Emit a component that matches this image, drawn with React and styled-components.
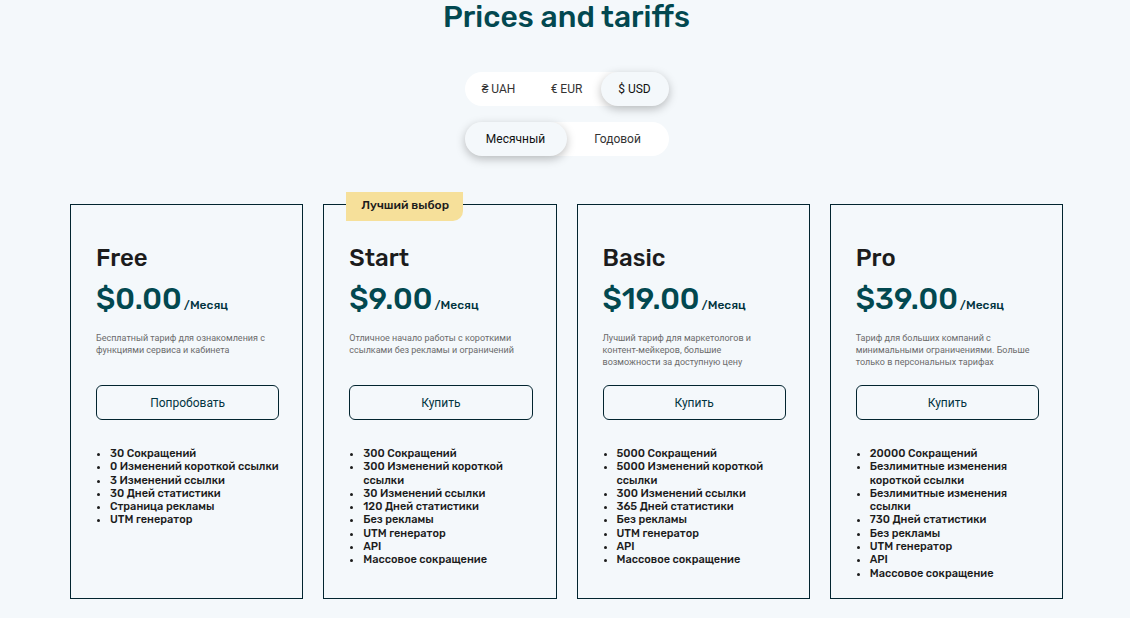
import React, { useState } from 'react'
import styled, { createGlobalStyle } from 'styled-components'

const currencies = [
  { id: 'uah', label: '₴ UAH' },
  { id: 'eur', label: '€ EUR' },
  { id: 'usd', label: '$ USD' },
]

const periods = [
  { id: 'month', label: 'Месячный' },
  { id: 'year', label: 'Годовой' },
]

const plans = [
  {
    name: 'Free',
    price: '$0.00',
    description: 'Бесплатный тариф для ознакомления с функциями сервиса и кабинета',
    action: 'Попробовать',
    features: [
      '30 Сокращений',
      '0 Изменений короткой ссылки',
      '3 Изменений ссылки',
      '30 Дней статистики',
      'Страница рекламы',
      'UTM генератор',
    ],
  },
  {
    name: 'Start',
    price: '$9.00',
    badge: 'Лучший выбор',
    description: 'Отличное начало работы с короткими ссылками без рекламы и ограничений',
    action: 'Купить',
    features: [
      '300 Сокращений',
      '300 Изменений короткой ссылки',
      '30 Изменений ссылки',
      '120 Дней статистики',
      'Без рекламы',
      'UTM генератор',
      'API',
      'Массовое сокращение',
    ],
  },
  {
    name: 'Basic',
    price: '$19.00',
    description: 'Лучший тариф для маркетологов и контент-мейкеров, большие возможности за доступную цену',
    action: 'Купить',
    features: [
      '5000 Сокращений',
      '5000 Изменений короткой ссылки',
      '300 Изменений ссылки',
      '365 Дней статистики',
      'Без рекламы',
      'UTM генератор',
      'API',
      'Массовое сокращение',
    ],
  },
  {
    name: 'Pro',
    price: '$39.00',
    description: 'Тариф для больших компаний с минимальными ограничениями. Больше только в персональных тарифах',
    action: 'Купить',
    features: [
      '20000 Сокращений',
      'Безлимитные изменения короткой ссылки',
      'Безлимитные изменения ссылки',
      '730 Дней статистики',
      'Без рекламы',
      'UTM генератор',
      'API',
      'Массовое сокращение',
    ],
  },
]

const GlobalStyle = createGlobalStyle`
  * {
    box-sizing: border-box;
    margin: 0;
    padding: 0;
  }
  body {
    background-color: #f4f8fb;
    color: #1c1c1c;
    font-family: Roboto, 'Liberation Sans', sans-serif;
  }
`

const Page = styled.main`
  display: flex;
  flex-direction: column;
  align-items: center;
  padding: 0 67px 19px 70px;
`

const Title = styled.h1`
  color: #024850;
  font-family: Rubik, Roboto, sans-serif;
  font-size: 30px;
  font-weight: 500;
  line-height: 34px;
  text-align: center;
`

const Switches = styled.div`
  display: flex;
  flex-direction: column;
  gap: 16px;
  width: 204px;
  margin: 38px 0 48px;
`

const SwitchGroup = styled.fieldset`
  display: flex;
  border: none;
  border-radius: 17px;
  background-color: #fff;
`

const Option = styled.label`
  flex: 1 1 0;
  border-radius: 17px;
  color: ${({ $selected }) => ($selected ? '#111' : '#333')};
  background-color: ${({ $selected }) => ($selected ? '#f4f8fb' : 'transparent')};
  box-shadow: ${({ $selected }) => ($selected ? '0 3px 10px rgba(0, 0, 0, 0.25)' : 'none')};
  cursor: pointer;
  font-size: 12px;
  line-height: 34px;
  text-align: center;
  input {
    appearance: none;
    position: absolute;
  }
`

const Plans = styled.section`
  display: grid;
  grid-template-columns: repeat(4, 1fr);
  gap: 20px;
  width: 100%;
`

const Card = styled.article`
  position: relative;
  display: flex;
  flex-direction: column;
  padding: 38px 23px 18px 25px;
  border: 1px solid #02242f;
`

const Badge = styled.span`
  position: absolute;
  top: -13px;
  left: 22px;
  padding: 0 14px 2px 15px;
  border-radius: 0 0 10px 0;
  background-color: #f6e09a;
  font-family: Rubik, Roboto, sans-serif;
  font-size: 12px;
  font-weight: 500;
  line-height: 27px;
`

const PlanName = styled.h2`
  font-family: Rubik, Roboto, sans-serif;
  font-size: 24px;
  font-weight: 500;
  line-height: 30px;
`

const Price = styled.p`
  margin-top: 8px;
  color: #024850;
  font-family: Rubik, Roboto, sans-serif;
  font-size: 30px;
  font-weight: 500;
  line-height: 36px;
  white-space: nowrap;
  span {
    margin-left: 2px;
    color: #02343f;
    font-size: 12px;
  }
`

const Description = styled.p`
  min-height: 36px;
  margin-top: 9px;
  padding-right: 6px;
  color: #6b6b6b;
  font-size: 9px;
  line-height: 12px;
`

const BuyButton = styled.button`
  height: 35px;
  margin-top: 17px;
  border: 1px solid #02242f;
  border-radius: 6px;
  background-color: transparent;
  color: #02343f;
  cursor: pointer;
  font-family: inherit;
  font-size: 12px;
`

const Features = styled.ul`
  margin-top: 27px;
  padding-left: 14px;
  font-family: Rubik, Roboto, sans-serif;
  font-size: 11px;
  font-weight: 500;
  line-height: 1.21;
`

function Switch({ name, title, options, value, onChange }) {
  return (
    <SwitchGroup aria-label={title}>
      {options.map(option => (
        <Option key={option.id} $selected={option.id === value}>
          <input
            type="radio"
            name={name}
            value={option.id}
            checked={option.id === value}
            onChange={() => onChange(option.id)}
          />
          {option.label}
        </Option>
      ))}
    </SwitchGroup>
  )
}

function Plan({ plan }) {
  return (
    <Card>
      {plan.badge && <Badge>{plan.badge}</Badge>}
      <PlanName>{plan.name}</PlanName>
      <Price>
        {plan.price}
        <span>/Месяц</span>
      </Price>
      <Description>{plan.description}</Description>
      <BuyButton type="button">{plan.action}</BuyButton>
      <Features>
        {plan.features.map(feature => (
          <li key={feature}>{feature}</li>
        ))}
      </Features>
    </Card>
  )
}

function App() {
  const [currency, setCurrency] = useState('usd')
  const [period, setPeriod] = useState('month')

  return (
    <>
      <GlobalStyle />
      <Page>
        <Title>Prices and tariffs</Title>
        <Switches>
          <Switch name="currency" title="Валюта" options={currencies} value={currency} onChange={setCurrency} />
          <Switch name="period" title="Период" options={periods} value={period} onChange={setPeriod} />
        </Switches>
        <Plans>
          {plans.map(plan => (
            <Plan key={plan.name} plan={plan} />
          ))}
        </Plans>
      </Page>
    </>
  )
}

export default App
